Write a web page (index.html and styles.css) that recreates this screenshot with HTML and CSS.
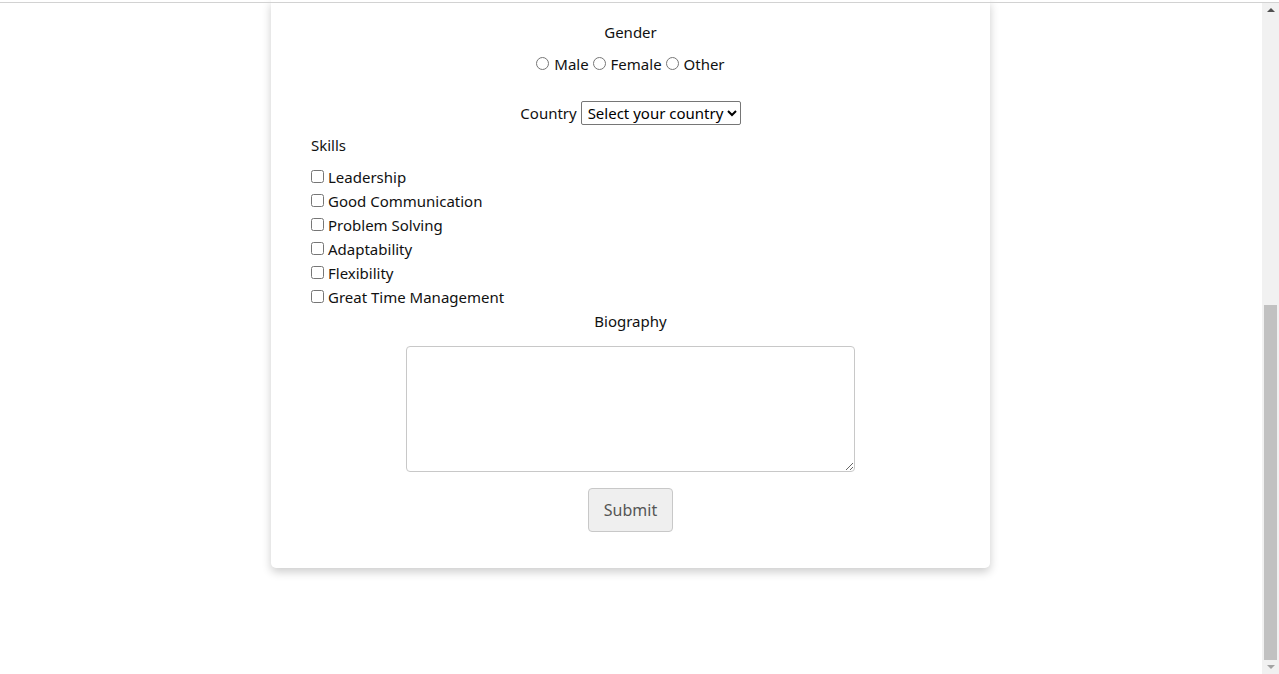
FILE: index.html
```html
<!DOCTYPE html>
<html lang="en">
<head>
<meta charset="utf-8">
<title>Form</title>
<link rel="stylesheet" href="styles.css">
</head>
<body>
<div class="topline"></div>
<main class="page">
  <form class="card">
    <div class="field center">
      <div class="label">Gender</div>
      <div class="radios">
        <label><input type="radio" name="gender"> Male</label>
        <label><input type="radio" name="gender"> Female</label>
        <label><input type="radio" name="gender"> Other</label>
      </div>
    </div>
    <div class="field center country">
      <label>Country <select><option>Select your country</option></select></label>
    </div>
    <div class="skills">
      <div class="label">Skills</div>
      <label class="check"><input type="checkbox">Leadership</label>
      <label class="check"><input type="checkbox">Good Communication</label>
      <label class="check"><input type="checkbox">Problem Solving</label>
      <label class="check"><input type="checkbox">Adaptability</label>
      <label class="check"><input type="checkbox">Flexibility</label>
      <label class="check"><input type="checkbox">Great Time Management</label>
    </div>
    <div class="field center bio">
      <div class="label">Biography</div>
      <textarea></textarea>
    </div>
    <div class="center">
      <button type="button" class="submit">Submit</button>
    </div>
  </form>
</main>
<div class="scrollbar">
  <div class="arrow up"></div>
  <div class="track"><div class="thumb"></div></div>
  <div class="arrow down"></div>
</div>
</body>
</html>
```

FILE: styles.css
```css
html, body {
  margin: 0;
  padding: 0;
  height: 100%;
  overflow: hidden;
  background: #fff;
}
body {
  font-family: "Noto Sans", "Open Sans", sans-serif;
  font-size: 15px;
  color: #111;
  margin-right: 17px;
}
.topline {
  position: fixed;
  top: 2px;
  left: 0;
  right: 0;
  height: 1px;
  background: #d2d2d2;
  z-index: 5;
}
.page {
  display: flex;
  justify-content: center;
  padding-right: 1px;
}
.card {
  width: 639px;
  padding: 20px 40px 36px;
  background: #fff;
  border-radius: 0 0 5px 5px;
  box-shadow: 0 4px 10px rgba(0, 0, 0, 0.2);
  display: flex;
  flex-direction: column;
  line-height: 24px;
}
.center {
  display: flex;
  flex-direction: column;
  align-items: center;
}
.radios {
  margin-top: 8px;
  display: flex;
  gap: 4px;
}
.radios input {
  margin: 0 1px 0 0;
  width: 13px;
  height: 13px;
  vertical-align: 0;
}
.country {
  margin-top: 25px;
}
.country select {
  font: inherit;
  height: 24px;
  padding: 0 0 0 2px;
  border: 1px solid #767676;
  border-radius: 2px;
  background: #fff;
  color: #000;
}
.skills {
  margin-top: 8px;
  display: flex;
  flex-direction: column;
  gap: 0;
}
.skills .label {
  margin-bottom: 8px;
}
.check {
  display: flex;
  align-items: center;
  height: 24px;
}
.check input {
  margin: -2px 4px 0 0;
  width: 13px;
  height: 13px;
}
.bio textarea {
  margin-top: 13px;
  width: 449px;
  height: 126px;
  box-sizing: border-box;
  border: 1px solid #c8c8c8;
  border-radius: 4px;
  font: inherit;
}
.submit {
  margin-top: 16px;
  width: 85px;
  height: 44px;
  font: inherit;
  font-size: 16px;
  color: #555;
  background: #efefef;
  border: 1px solid #c8c8c8;
  border-radius: 4px;
}
.scrollbar {
  position: fixed;
  top: 3px;
  right: 0;
  bottom: 0;
  width: 17px;
  background: #f1f1f1;
  display: flex;
  flex-direction: column;
}
.arrow {
  height: 14px;
  display: flex;
  justify-content: center;
  align-items: center;
}
.arrow.up::before {
  content: "";
  border-left: 4px solid transparent;
  border-right: 4px solid transparent;
  border-bottom: 4px solid #505050;
}
.arrow.down::before {
  content: "";
  border-left: 4px solid transparent;
  border-right: 4px solid transparent;
  border-top: 4px solid #a3a3a3;
}
.track {
  flex: 1;
  display: flex;
  flex-direction: column;
  justify-content: flex-end;
  padding: 0 2px 0;
}
.thumb {
  height: 355px;
  background: #c1c1c1;
}
```
